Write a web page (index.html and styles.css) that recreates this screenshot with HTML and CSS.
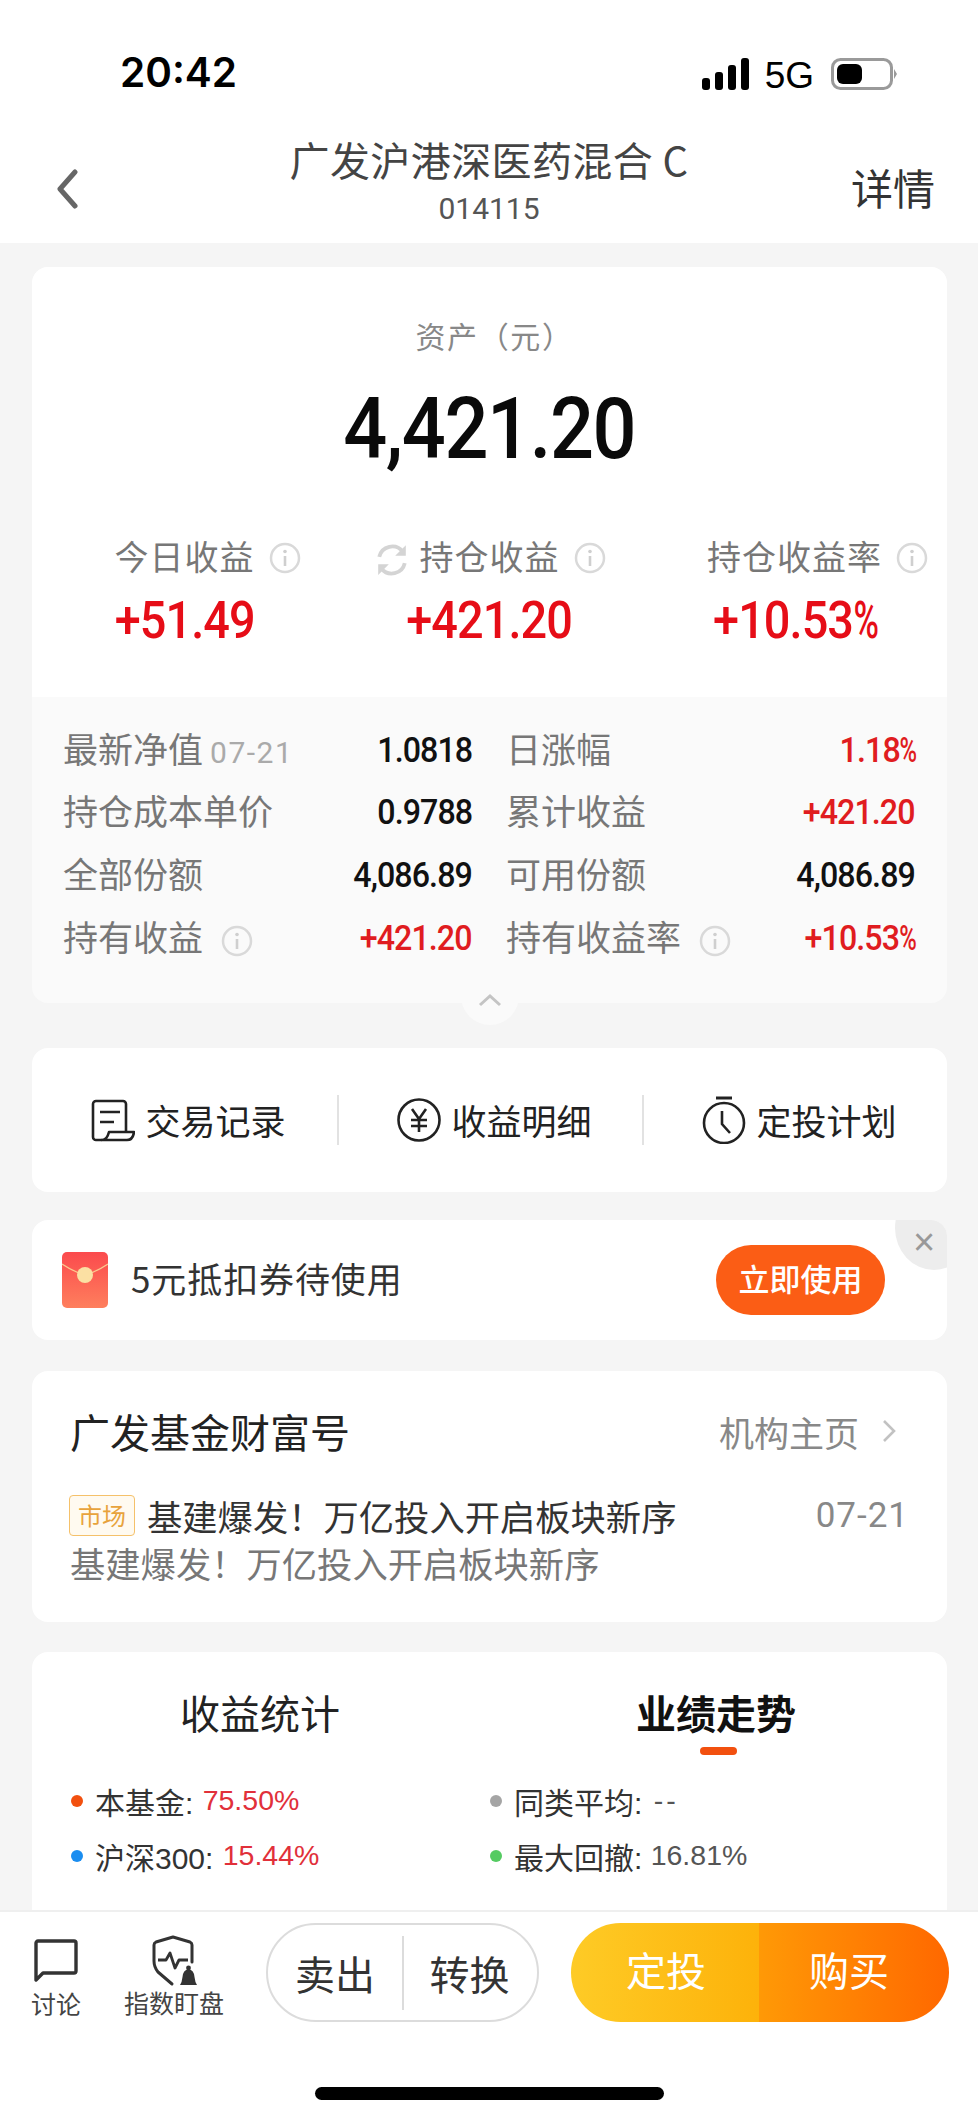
FILE: index.html
```html
<!DOCTYPE html>
<html lang="zh-CN">
<head>
<meta charset="utf-8">
<title>广发沪港深医药混合C</title>
<link rel="stylesheet" href="styles.css">
</head>
<body>
<div class="phone">
  <header class="status">
    <span class="clock">20:42</span>
    <div class="status-right">
      <svg class="signal" width="48" height="32" viewBox="0 0 48 32"><rect x="0" y="20" width="8" height="12" rx="3"/><rect x="13" y="14" width="8" height="18" rx="3"/><rect x="26" y="7" width="8" height="25" rx="3"/><rect x="39" y="0" width="8" height="32" rx="3"/></svg>
      <span class="net">5G</span>
      <svg class="battery" width="66" height="32" viewBox="0 0 66 32"><rect x="1.5" y="1.5" width="59" height="29" rx="8" fill="#fff" stroke="#9a9a9a" stroke-width="3"/><rect x="6" y="6" width="25" height="20" rx="6" fill="#000"/><path d="M63 11l3 5-3 5z" fill="#9a9a9a"/></svg>
    </div>
  </header>

  <nav class="nav">
    <svg class="back" width="24" height="40" viewBox="0 0 24 40"><path d="M20 3L5 20l15 17" fill="none" stroke="#666" stroke-width="5" stroke-linecap="round" stroke-linejoin="round"/></svg>
    <div class="nav-title">
      <div class="fund-name">广发沪港深医药混合 C</div>
      <div class="fund-code">014115</div>
    </div>
    <span class="nav-detail">详情</span>
  </nav>

  <main class="content">
    <section class="card asset">
      <div class="asset-top">
        <div class="asset-label">资产（元）</div>
        <div class="asset-value"><span class="squeeze">4,421.20</span></div>
        <div class="stats">
          <div class="stat">
            <div class="stat-label">今日收益
              <svg class="info info-after" viewBox="0 0 32 32"><circle cx="16" cy="16" r="14" fill="none" stroke="#d9d9d9" stroke-width="2.5"/><circle cx="16" cy="9.5" r="1.8" fill="#cfcfcf"/><path d="M16 14v10" stroke="#cfcfcf" stroke-width="2.6"/></svg>
            </div>
            <div class="stat-value"><span class="squeeze">+51.49</span></div>
          </div>
          <div class="stat">
            <div class="stat-label">
              <svg class="refresh" viewBox="0 0 32 32"><path d="M4 13a12.500 12.500 0 0 1 22-5M28 19a12.500 12.500 0 0 1-22 5" fill="none" stroke="#d4d4d4" stroke-width="3.600"/><path d="M29 2v10h-10zM3 30V20h10z" fill="#d4d4d4"/></svg>
              持仓收益
              <svg class="info info-after" viewBox="0 0 32 32"><circle cx="16" cy="16" r="14" fill="none" stroke="#d9d9d9" stroke-width="2.5"/><circle cx="16" cy="9.5" r="1.8" fill="#cfcfcf"/><path d="M16 14v10" stroke="#cfcfcf" stroke-width="2.6"/></svg>
            </div>
            <div class="stat-value"><span class="squeeze">+421.20</span></div>
          </div>
          <div class="stat">
            <div class="stat-label">持仓收益率
              <svg class="info info-after" viewBox="0 0 32 32"><circle cx="16" cy="16" r="14" fill="none" stroke="#d9d9d9" stroke-width="2.5"/><circle cx="16" cy="9.5" r="1.8" fill="#cfcfcf"/><path d="M16 14v10" stroke="#cfcfcf" stroke-width="2.6"/></svg>
            </div>
            <div class="stat-value"><span class="squeeze">+10.53<span class="pct">%</span></span></div>
          </div>
        </div>
      </div>
      <div class="details">
        <div class="row"><span class="row-label">最新净值<em class="date">07-21</em></span><span class="num">1.0818</span></div>
        <div class="row"><span class="row-label">日涨幅</span><span class="num red">1.18<span class="pct">%</span></span></div>
        <div class="row"><span class="row-label">持仓成本单价</span><span class="num">0.9788</span></div>
        <div class="row"><span class="row-label">累计收益</span><span class="num red">+421.20</span></div>
        <div class="row"><span class="row-label">全部份额</span><span class="num">4,086.89</span></div>
        <div class="row"><span class="row-label">可用份额</span><span class="num">4,086.89</span></div>
        <div class="row"><span class="row-label">持有收益<svg class="info info-inline" viewBox="0 0 32 32"><circle cx="16" cy="16" r="14" fill="none" stroke="#d9d9d9" stroke-width="2.5"/><circle cx="16" cy="9.5" r="1.8" fill="#cfcfcf"/><path d="M16 14v10" stroke="#cfcfcf" stroke-width="2.6"/></svg></span><span class="num red">+421.20</span></div>
        <div class="row"><span class="row-label">持有收益率<svg class="info info-inline" viewBox="0 0 32 32"><circle cx="16" cy="16" r="14" fill="none" stroke="#d9d9d9" stroke-width="2.5"/><circle cx="16" cy="9.5" r="1.8" fill="#cfcfcf"/><path d="M16 14v10" stroke="#cfcfcf" stroke-width="2.6"/></svg></span><span class="num red">+10.53<span class="pct">%</span></span></div>
      </div>
      <div class="collapse">
        <svg width="24" height="14" viewBox="0 0 24 14"><path d="M2 12l10-9 10 9" fill="none" stroke="#c4c4c4" stroke-width="3"/></svg>
      </div>
    </section>

    <section class="card actions">
      <div class="action">
        <svg class="action-icon" width="44" height="43" viewBox="0 0 44 43"><path d="M11 41H5a3 3 0 0 1-3-3V5a3 3 0 0 1 3-3h27a3 3 0 0 1 3 3v28" fill="none" stroke="#222" stroke-width="2.6"/><path d="M9 13h20M9 23h14" stroke="#222" stroke-width="2.6" fill="none"/><path d="M18 33h25q-1 8-7 8H11q5 0 7-8z" fill="none" stroke="#222" stroke-width="2.6" stroke-linejoin="round"/></svg>
        <span>交易记录</span>
      </div>
      <div class="action action-split">
        <svg class="action-icon" width="44" height="44" viewBox="0 0 44 44"><circle cx="22" cy="22" r="20.5" fill="none" stroke="#222" stroke-width="2.6"/><path d="M15 11l7 10 7-10M14 22h16M14 28h16M22 21v13" fill="none" stroke="#222" stroke-width="2.6"/></svg>
        <span>收益明细</span>
      </div>
      <div class="action action-split">
        <svg class="action-icon" width="44" height="48" viewBox="0 0 44 48"><path d="M14 2h16" stroke="#222" stroke-width="3" fill="none"/><circle cx="22" cy="27" r="20" fill="none" stroke="#222" stroke-width="2.6"/><path d="M20 15v13l8 9" fill="none" stroke="#222" stroke-width="2.6"/></svg>
        <span>定投计划</span>
      </div>
    </section>

    <section class="card coupon">
      <svg class="envelope" width="46" height="56" viewBox="0 0 46 56">
        <defs><linearGradient id="packet" x1="0" y1="0" x2="0" y2="1"><stop offset="0" stop-color="#fb4a4d"/><stop offset="1" stop-color="#fe7f5d"/></linearGradient></defs>
        <rect width="46" height="56" rx="5" fill="url(#packet)"/>
        <path d="M0 12q12 8 23 11 11-3 23-11" fill="none" stroke="#fbc98f" stroke-width="1.2"/>
        <circle cx="23" cy="23" r="8" fill="#fbe0a3"/>
      </svg>
      <span class="coupon-text">5元抵扣券待使用</span>
      <span class="coupon-btn">立即使用</span>
      <span class="coupon-close">×</span>
    </section>

    <section class="card news">
      <div class="news-head">
        <span class="news-source">广发基金财富号</span>
        <span class="news-link">机构主页<svg width="16" height="26" viewBox="0 0 16 26"><path d="M3 3l10 10L3 23" fill="none" stroke="#c2c2c2" stroke-width="2.6"/></svg></span>
      </div>
      <div class="news-line">
        <span class="tag">市场</span>
        <span class="news-title">基建爆发！万亿投入开启板块新序</span>
        <span class="news-date">07-21</span>
      </div>
      <div class="news-sub">基建爆发！万亿投入开启板块新序</div>
    </section>

    <section class="card perf">
      <div class="tabs">
        <div class="tab">收益统计</div>
        <div class="tab tab-on">业绩走势</div>
      </div>
      <div class="legend">
        <div class="legend-item"><i class="dot dot-orange"></i>本基金: <b>75.50%</b></div>
        <div class="legend-item"><i class="dot dot-gray"></i>同类平均: <span class="muted dash">--</span></div>
        <div class="legend-item"><i class="dot dot-blue"></i>沪深300: <b>15.44%</b></div>
        <div class="legend-item"><i class="dot dot-green"></i>最大回撤: <span class="muted">16.81%</span></div>
      </div>
    </section>
  </main>

  <footer class="bottom">
    <div class="toolbar">
      <div class="tool tool-talk">
        <svg width="44" height="43" viewBox="0 0 44 43"><path d="M2 41V4a2 2 0 0 1 2-2h36a2 2 0 0 1 2 2v28a2 2 0 0 1-2 2H9z" fill="none" stroke="#333" stroke-width="3.4" stroke-linejoin="round"/></svg>
        <span>讨论</span>
      </div>
      <div class="tool tool-watch">
        <svg width="50" height="52" viewBox="0 0 50 52"><path d="M43 27V10q0-2-2-3L24 2 7 7q-2 1-2 3v16q0 6 4 11l14 12" fill="none" stroke="#333" stroke-width="3" stroke-linecap="round" stroke-linejoin="round"/><path d="M9 25h8l4-7 5 15 4-8h9" fill="none" stroke="#333" stroke-width="2.8" stroke-linejoin="round"/><path d="M31 50q2-3 2.500-8 .5-7 6-8 5.500 1 6 8 .5 5 2.500 8z" fill="#333"/><circle cx="39.500" cy="33" r="2.400" fill="#333"/></svg>
        <span>指数盯盘</span>
      </div>
      <div class="sell-group">
        <span class="sell">卖出</span>
        <span class="sell sell-next">转换</span>
      </div>
      <div class="buy-group">
        <span class="buy buy-plan">定投</span>
        <span class="buy buy-now">购买</span>
      </div>
    </div>
    <div class="home-bar"></div>
  </footer>
</div>
</body>
</html>
```

FILE: styles.css
```css
* { box-sizing: border-box; }

html, body { margin: 0; padding: 0; background: #fff; }

body {
  font-family: "Noto Sans CJK SC", "Liberation Sans", sans-serif;
  color: #222;
}

.phone {
  width: 978px;
  height: 2120px;
  display: flex;
  flex-direction: column;
  overflow: hidden;
  background: #f5f5f5;
}

/* status bar */
.status {
  flex: 0 0 120px;
  background: #fff;
  display: flex;
  justify-content: space-between;
  padding: 50px 81px 0 120px;
}
.clock { font: 600 40.500px/46px Inter, sans-serif; color: #000; }
.status-right { display: flex; align-items: flex-start; padding-top: 8px; }
.signal { fill: #000; }
.net { font: 400 37px/36px "Liberation Sans", sans-serif; color: #000; margin: 0 17px 0 15px; }

/* navigation */
.nav {
  flex: 0 0 123px;
  background: #fff;
  display: grid;
  grid-template-columns: 200px 1fr 200px;
}
.back { margin: 49px 0 0 55px; }
.nav-title { text-align: center; padding-top: 15px; }
.fund-name { font-size: 40px; line-height: 48px; color: #444; white-space: nowrap; letter-spacing: .4px; }
.fund-code { font: 400 30px/44px Roboto, sans-serif; color: #555; margin-top: 4px; }
.nav-detail { font-size: 42px; line-height: 50px; color: #333; text-align: right; padding: 42px 43px 0 0; }

/* scrolling content */
.content { flex: 1; padding: 24px 31px 0 32px; overflow: hidden; }
.card { background: #fff; border-radius: 16px; }

/* figures set in a narrowed numeral */
.squeeze { display: inline-block; transform: scaleX(.9); transform-origin: center; white-space: nowrap; }
.pct { display: inline-block; transform: scaleX(.74); transform-origin: left; margin-right: -.22em; }

/* asset summary */
.asset { background: #fafafa; position: relative; margin-bottom: 45px; }
.asset-top { background: #fff; border-radius: 16px 16px 0 0; height: 430px; padding: 48px 0 0; text-align: center; }
.asset-label { font-size: 30px; line-height: 40px; color: #888; letter-spacing: 1.600px; padding-left: 10px; }
.asset-value { font: 500 86px/90px Roboto, sans-serif; color: #0a0a0a; margin-top: 29px; letter-spacing: -1.5px; }
.stats { display: grid; grid-template-columns: repeat(3, 1fr); margin-top: 60px; }
.stat-label { position: relative; display: inline-block; font-size: 34px; line-height: 44px; color: #777; white-space: nowrap; letter-spacing: 1px; }
.stat-value { font: 500 52px/60px Roboto, sans-serif; color: #e60d17; margin-top: 13px; letter-spacing: -1px; }
.info { width: 32px; height: 32px; }
.info-after { position: absolute; left: 100%; top: 8px; margin-left: 14px; }
.refresh { position: absolute; right: 100%; top: 9px; width: 34px; height: 34px; margin-right: 11px; }
.info-inline { vertical-align: -6px; margin-left: 18px; }

.details {
  height: 306px;
  padding: 22px 32px 0 31px;
  display: grid;
  grid-template-columns: 409px 409px;
  column-gap: 34px;
  grid-auto-rows: 62.6px;
}
.row { display: flex; justify-content: space-between; align-items: center; white-space: nowrap; }
.row-label { font-size: 35px; color: #777; margin-top: -6px; }
.date { font: 400 30px Roboto, sans-serif; color: #aaa; margin-left: 7px; letter-spacing: 1.5px; }
.num { display: inline-block; font: 500 35px Roboto, sans-serif; color: #111; letter-spacing: -1px; transform: scaleX(.92); transform-origin: right; }
.num.red { color: #e01c20; }

.collapse {
  position: absolute;
  left: 429px;
  bottom: -22px;
  width: 58px;
  height: 40px;
  border-radius: 0 0 29px 29px;
  background: #fafafa;
  text-align: center;
  line-height: 30px;
}

/* quick actions */
.actions {
  height: 144px;
  margin-bottom: 28px;
  display: grid;
  grid-template-columns: repeat(3, 1fr);
  padding-top: 47px;
  align-items: start;
}
.action {
  height: 50px;
  display: flex;
  align-items: center;
  justify-content: center;
  gap: 10px;
  font-size: 35px;
  color: #222;
  white-space: nowrap;
  padding-left: 8px;
}
.action span { margin-top: -2px; }
.action-split { border-left: 2px solid #e2e2e2; }

/* coupon banner */
.coupon {
  position: relative;
  height: 120px;
  margin-bottom: 31px;
  display: flex;
  align-items: center;
  padding: 0 62px 0 30px;
  overflow: hidden;
}
.envelope { flex: none; }
.coupon-text { font-size: 35px; color: #333; margin: -6px 0 0 23px; flex: 1; letter-spacing: .9px; }
.coupon-btn {
  width: 169px;
  height: 70px;
  border-radius: 35px;
  background: #fb5d15;
  color: #fff;
  font-size: 31px;
  font-weight: 500;
  line-height: 66px;
  text-align: center;
}
.coupon-close {
  position: absolute;
  right: -26px;
  top: -34px;
  width: 78px;
  height: 84px;
  border-radius: 50%;
  background: #ededed;
  color: #999;
  font: 400 38px/112px "Liberation Sans", sans-serif;
  padding-right: 20px;
  text-align: center;
}

/* news */
.news { height: 251px; margin-bottom: 30px; padding: 33px 38px 0 38px; }
.news-head { display: flex; justify-content: space-between; align-items: center; height: 54px; }
.news-source { font-size: 40px; color: #222; }
.news-link { font-size: 35px; color: #888; display: flex; align-items: center; gap: 22px; padding-right: 12px; }
.news-line { display: flex; align-items: center; margin-top: 33px; height: 48px; }
.tag {
  width: 66px;
  height: 41px;
  border: 1.5px solid #f5c16a;
  border-radius: 4px;
  background: #fffaf0;
  color: #e8a33c;
  font-size: 24px;
  line-height: 37px;
  text-align: center;
  flex: none;
  margin-left: -1px;
}
.news-title { font-size: 35.300px; color: #333; margin-left: 12px; flex: 1; white-space: nowrap; }
.news-date { font: 400 35px Roboto, sans-serif; color: #888; letter-spacing: 1px; }
.news-sub { font-size: 35.300px; line-height: 48px; color: #777; white-space: nowrap; }

/* performance */
.perf { height: 300px; border-radius: 16px 16px 0 0; }
.tabs { display: grid; grid-template-columns: 1fr 1fr; padding: 33px 3px 0 0; }
.tab { font-size: 40px; line-height: 54px; text-align: center; color: #222; position: relative; }
.tab-on { font-weight: 700; color: #111; }
.tab-on::after {
  content: "";
  position: absolute;
  left: 50%;
  bottom: -16px;
  width: 37px;
  height: 8px;
  margin-left: -16px;
  border-radius: 4px;
  background: #f2500f;
}
.legend {
  display: grid;
  grid-template-columns: 419px 1fr;
  grid-auto-rows: 55px;
  padding: 34px 0 0 39px;
}
.legend-item { display: flex; align-items: center; font: 400 30px "Liberation Sans", "Noto Sans CJK SC", sans-serif; color: #333; white-space: pre; }
.legend-item b { font-weight: 400; font-size: 28.500px; color: #e1303a; margin-left: 1px; }
.muted { font-size: 28.500px; color: #555; }
.dash { letter-spacing: 3px; margin-left: 3px; }
.dot { width: 12px; height: 12px; border-radius: 50%; margin-right: 12px; flex: none; }
.dot-orange { background: #f2500f; }
.dot-gray { background: #a5a5a5; }
.dot-blue { background: #1a8df0; }
.dot-green { background: #55cb62; }

/* bottom toolbar */
.bottom { flex: 0 0 210px; background: #fff; border-top: 2px solid #efefef; position: relative; }
.toolbar { display: flex; align-items: flex-start; padding-top: 11px; }
.tool { display: flex; flex-direction: column; align-items: center; font-size: 25px; color: #444; line-height: 30px; white-space: nowrap; flex: none; }
.tool span { margin-top: 6px; }
.tool-talk { width: 50px; margin-left: 31px; padding-top: 16px; }
.tool-watch { width: 100px; margin-left: 43px; padding-top: 12px; }
.tool-watch span { margin-top: 0; }

.sell-group {
  margin-left: 42px;
  width: 273px;
  height: 99px;
  border: 2px solid #dcdcdc;
  border-radius: 50px;
  display: grid;
  grid-template-columns: 134px 1fr;
  align-items: center;
  text-align: center;
  font-size: 40px;
  color: #333;
}
.sell { line-height: 74px; }
.sell-next { border-left: 2px solid #dcdcdc; padding-right: 2px; }

.buy-group {
  margin-left: 32px;
  width: 378px;
  height: 99px;
  border-radius: 50px;
  overflow: hidden;
  display: grid;
  grid-template-columns: 188px 1fr;
  text-align: center;
  font-size: 40px;
  line-height: 93px;
  color: #fff;
}
.buy-plan { background: linear-gradient(90deg, #fecb26, #fdb20a); padding-left: 2px; }
.buy-now { background: linear-gradient(90deg, #ff9906, #ff6800); padding-right: 10px; }

.home-bar {
  position: absolute;
  left: 315px;
  top: 175px;
  width: 349px;
  height: 13px;
  border-radius: 7px;
  background: #000;
}
```
